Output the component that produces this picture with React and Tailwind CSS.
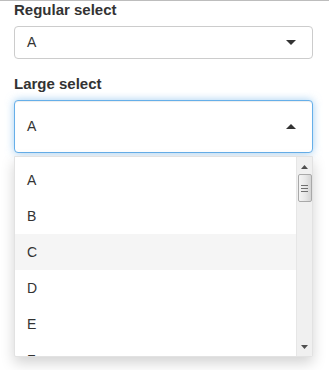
import React from 'react';

const options = ['A', 'B', 'C', 'D', 'E', 'F'];

const Caret = ({ up }) => (
  <svg width="10" height="5" viewBox="0 0 10 5" className="shrink-0">
    <path d={up ? 'M0 5 L5 0 L10 5 Z' : 'M0 0 L10 0 L5 5 Z'} fill="#333" />
  </svg>
);

const ScrollBar = () => (
  <div className="flex w-[16px] shrink-0 flex-col items-center border-l border-[#e6e6e6] bg-[#f0f0f0]">
    <div className="flex h-[17px] items-center justify-center pt-[2px]">
      <svg width="7" height="4" viewBox="0 0 7 4">
        <path d="M0 4 L3.5 0 L7 4 Z" fill="#505050" />
      </svg>
    </div>
    <div className="flex h-[28px] w-[14px] flex-col items-center justify-center gap-[2px] rounded-[2px] border border-[#a9a9a9] bg-gradient-to-r from-[#f4f4f4] via-[#e8e8e8] to-[#d4d4d4]">
      <div className="h-px w-[7px] bg-[#6f6f6f]" />
      <div className="h-px w-[7px] bg-[#6f6f6f]" />
      <div className="h-px w-[7px] bg-[#6f6f6f]" />
    </div>
    <div className="flex-1" />
    <div className="flex h-[16px] items-center justify-center pb-[3px]">
      <svg width="7" height="4" viewBox="0 0 7 4">
        <path d="M0 0 L7 0 L3.5 4 Z" fill="#505050" />
      </svg>
    </div>
  </div>
);

export default function App() {
  return (
    <div className="min-h-[370px] bg-white text-[14px] text-[#333] [font-family:'Liberation_Sans',Arial,sans-serif]">
      <div className="h-px w-full bg-[#bdbdbd]" />
      <div className="w-[313px] pl-[14px]">
        {/* regular select */}
        <div className="mt-[-1px]">
          <label className="mb-[6px] block h-[20px] text-[15px] leading-[20px] font-bold">Regular select</label>
          <div className="flex h-[33px] items-center justify-between rounded-[4px] border border-[#ccc] bg-white pl-[12px] pr-[16px]">
            <span>A</span>
            <Caret />
          </div>
        </div>

        {/* large select */}
        <div className="mt-[15px]">
          <label className="mb-[6px] block h-[20px] text-[15px] leading-[20px] font-bold">Large select</label>
          <div className="relative">
            <div className="flex h-[53px] items-center justify-between rounded-[4px] border border-[#66afe9] bg-white pl-[12px] pr-[16px] shadow-[inset_0_1px_1px_rgba(0,0,0,0.075),0_0_8px_rgba(102,175,233,0.6)]">
              <span>A</span>
              <Caret up />
            </div>
            <div className="absolute left-0 right-0 top-full mt-[3px] flex h-[201px] overflow-hidden rounded-b-[2px] border border-[#e2e2e2] bg-white shadow-[0_6px_14px_rgba(0,0,0,0.175)]">
              <ul className="flex-1 overflow-hidden pt-[5px]">
                {options.map((o) => (
                  <li
                    key={o}
                    className={`flex h-[36px] items-center pl-[12px] ${o === 'C' ? 'bg-[#f5f5f5]' : ''}`}
                  >
                    {o}
                  </li>
                ))}
              </ul>
              <ScrollBar />
            </div>
          </div>
        </div>
      </div>
    </div>
  );
}
